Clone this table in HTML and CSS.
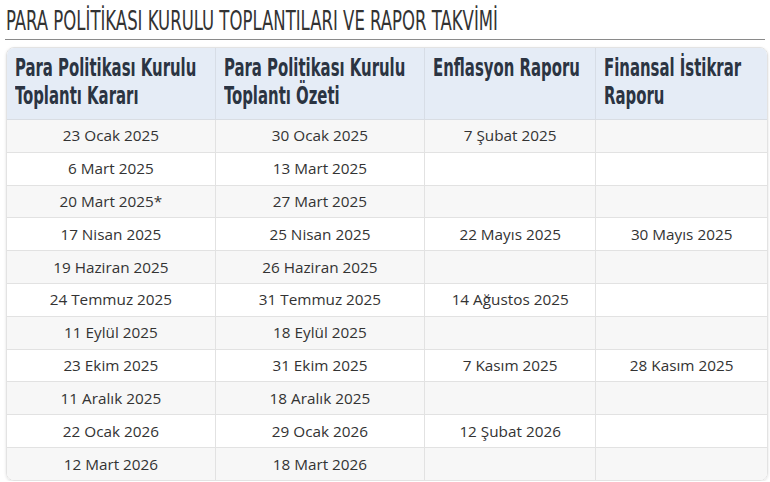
FILE: index.html
```html
<!DOCTYPE html>
<html lang="tr">
<head>
<meta charset="utf-8">
<link rel="stylesheet" href="styles.css">
</head>
<body>
<h2 class="title"><span class="title-text">PARA POLİTİKASI KURULU TOPLANTILARI VE RAPOR TAKVİMİ</span></h2>
<div class="card">
<table class="cal">
<colgroup><col class="c1"><col class="c2"><col class="c3"><col class="c4"></colgroup>
<thead>
<tr><th><div class="hd">Para Politikası Kurulu Toplantı Kararı</div></th><th><div class="hd">Para Politikası Kurulu Toplantı Özeti</div></th><th><div class="hd">Enflasyon Raporu</div></th><th><div class="hd">Finansal İstikrar Raporu</div></th></tr>
</thead>
<tbody>
<tr><td>23 Ocak 2025</td><td>30 Ocak 2025</td><td>7 Şubat 2025</td><td></td></tr>
<tr><td>6 Mart 2025</td><td>13 Mart 2025</td><td></td><td></td></tr>
<tr><td>20 Mart 2025*</td><td>27 Mart 2025</td><td></td><td></td></tr>
<tr><td>17 Nisan 2025</td><td>25 Nisan 2025</td><td>22 Mayıs 2025</td><td>30 Mayıs 2025</td></tr>
<tr><td>19 Haziran 2025</td><td>26 Haziran 2025</td><td></td><td></td></tr>
<tr><td>24 Temmuz 2025</td><td>31 Temmuz 2025</td><td>14 Ağustos 2025</td><td></td></tr>
<tr><td>11 Eylül 2025</td><td>18 Eylül 2025</td><td></td><td></td></tr>
<tr><td>23 Ekim 2025</td><td>31 Ekim 2025</td><td>7 Kasım 2025</td><td>28 Kasım 2025</td></tr>
<tr><td>11 Aralık 2025</td><td>18 Aralık 2025</td><td></td><td></td></tr>
<tr><td>22 Ocak 2026</td><td>29 Ocak 2026</td><td>12 Şubat 2026</td><td></td></tr>
<tr><td>12 Mart 2026</td><td>18 Mart 2026</td><td></td><td></td></tr>
</tbody>
</table>
</div>
</body>
</html>
```
FILE: styles.css
```css
html, body { margin: 0; padding: 0; background: #fff; }
body { padding: 0 5px; }
.title {
  margin: 0;
  padding-top: 6px;
  height: 40px;
  box-sizing: border-box;
  font-family: "DejaVu Sans Condensed", "Liberation Sans Narrow", sans-serif;
  font-weight: normal;
  font-size: 27px;
  line-height: 30px;
  color: #333;
  border-bottom: 1px solid #8a8a8a;
  white-space: nowrap;
  overflow: hidden;
}
.title-text {
  display: inline-block;
  margin-left: 1px;
  transform: scaleX(0.68);
  transform-origin: 0 0;
}
.card {
  margin: 7px 0 0 1px;
  width: 760px;
  border: 1px solid #e3e3e3;
  border-radius: 8px;
  overflow: hidden;
  box-shadow: 0 1px 3px rgba(0,0,0,0.12);
}
.cal {
  width: 100%;
  border-collapse: collapse;
  table-layout: fixed;
}
.c1 { width: 208px; }
.c2 { width: 209px; }
.c3 { width: 171px; }
.c4 { width: 171px; }
.cal th {
  background: #e5ecf6;
  color: #2b3442;
  font-family: "DejaVu Sans Condensed", "Liberation Sans Narrow", sans-serif;
  font-weight: bold;
  font-size: 24px;
  line-height: 28px;
  text-align: left;
  vertical-align: top;
  padding: 6px 6px 9px 8px;
  height: 56px;
  box-sizing: content-box;
  border-right: 1px solid #d7dde6;
  border-bottom: 1px solid #d9dde3;
  overflow: hidden;
}
.hd {
  width: 144%;
  transform: scaleX(0.69);
  transform-origin: 0 0;
}
.cal td {
  font-family: "Open Sans", sans-serif;
  font-size: 15.3px;
  color: #333;
  text-align: center;
  height: 32.8px;
  padding: 0 4px 1px;
  box-sizing: border-box;
  line-height: 20px;
  border-right: 1px solid #e2e2e2;
  border-bottom: 1px solid #e2e2e2;
}
.cal th:last-child, .cal td:last-child { border-right: none; }
.cal tbody tr:last-child td { border-bottom: none; }
.cal tbody tr:nth-child(odd) td { background: #f7f7f7; }
.cal tbody tr:nth-child(even) td { background: #fff; }
```
